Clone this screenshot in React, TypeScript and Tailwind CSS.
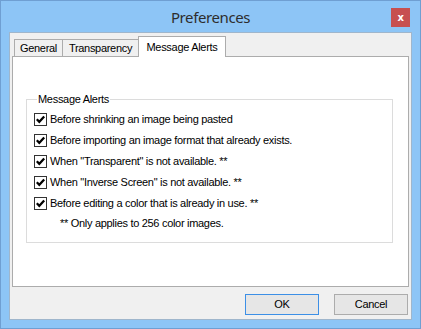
import React from "react";

function Check() {
  return (
    <div className="w-[13px] h-[13px] border border-[#333333] bg-white flex items-center justify-center shrink-0">
      <svg width="11" height="11" viewBox="0 0 11 11">
        <path d="M1.8 5.2 L4.3 7.8 L9.2 2.4" fill="none" stroke="#000" strokeWidth="2.2" />
      </svg>
    </div>
  );
}

const rows = [
  "Before shrinking an image being pasted",
  "Before importing an image format that already exists.",
  "When \"Transparent\" is not available. **",
  "When \"Inverse Screen\" is not available. **",
  "Before editing a color that is already in use. **",
];

export default function App() {
  return (
    <div className="w-[421px] h-[329px] border border-[#6f9fd2] bg-[#8dc5f6] flex flex-col font-['Liberation_Sans',sans-serif] text-[11px] tracking-[-0.3px] text-black leading-[13px]">
      <div className="relative h-[31px] flex items-center justify-center">
        <span className="font-['Noto_Sans',sans-serif] text-[15px] tracking-[-0.4px] text-[#2d2d2d] leading-[20px]">
          Preferences
        </span>
        <div className="absolute right-[10px] top-[7px] w-[19px] h-[19px] bg-[#c75050] flex items-center justify-center text-white font-bold text-[10px] leading-none font-['DejaVu_Sans',sans-serif]">
          x
        </div>
      </div>
      <div className="mx-[8px] mb-[8px] h-[288px] border border-[#9fb6cc] bg-[#f0f0f0] flex flex-col">
        <div className="h-[23px] flex items-end pl-[4px] relative z-10">
          <div className="w-[49px] h-[17px] border border-b-0 border-[#acacac] bg-[#f0f0f0] flex items-center justify-center">
            General
          </div>
          <div className="ml-[-1px] w-[77px] h-[17px] border border-b-0 border-[#acacac] bg-[#f0f0f0] flex items-center justify-center">
            Transparency
          </div>
          <div className="ml-[-1px] w-[88px] h-[21px] mb-[-1px] border border-b-0 border-[#acacac] bg-white flex items-center justify-center">
            Message Alerts
          </div>
        </div>
        <div className="mx-[2px] h-[231px] border border-[#acacac] bg-white pt-[42px] pl-[13px] pr-[15px]">
          <div className="relative h-[144px] border border-[#dcdcdc] pt-[9px] pl-[7px]">
            <span className="absolute left-[10px] top-[-7px] bg-white px-[1px]">Message Alerts</span>
            {rows.map((r) => (
              <div key={r} className="h-[21px] flex items-center gap-[3px]">
                <Check />
                <span>{r}</span>
              </div>
            ))}
            <div className="h-[19px] flex items-center pl-[26px]">** Only applies to 256 color images.</div>
          </div>
        </div>
        <div className="flex justify-end gap-[15px] mt-[7px] mr-[3px]">
          <div className="w-[74px] h-[21px] border border-[#3c8fe6] bg-[#e6e6e6] flex items-center justify-center">
            OK
          </div>
          <div className="w-[74px] h-[21px] border border-[#acacac] bg-[#e6e6e6] flex items-center justify-center">
            Cancel
          </div>
        </div>
      </div>
    </div>
  );
}
